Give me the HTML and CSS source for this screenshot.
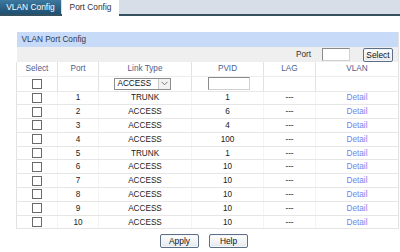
FILE: index.html
```html
<!DOCTYPE html>
<html>
<head>
<meta charset="utf-8">
<link rel="stylesheet" href="styles.css">
</head>
<body>
<div class="tabbar">
  <div class="tab tab-off">VLAN Config</div>
  <div class="tab tab-on">Port Config</div>
</div>
<div class="content">
  <table class="grid">
    <colgroup>
      <col class="c-sel"><col class="c-port"><col class="c-link"><col class="c-pvid"><col class="c-lag"><col class="c-vlan">
    </colgroup>
    <tr class="title-row"><td colspan="6">VLAN Port Config</td></tr>
    <tr class="tool-row"><td colspan="6"><div class="tool">
      <span class="lbl">Port</span><span class="inp port-inp"></span><span class="btn sel-btn">Select</span>
    </div></td></tr>
    <tr class="head-row"><th>Select</th><th>Port</th><th>Link Type</th><th>PVID</th><th>LAG</th><th>VLAN</th></tr>
    <tr class="filter-row">
      <td><span class="cb"></span></td>
      <td></td>
      <td><span class="dd"><span class="dd-text">ACCESS</span><span class="dd-arrow"><svg width="7" height="5" viewBox="0 0 7 5"><path d="M0.5 0.8 L3.5 3.8 L6.5 0.8" fill="none" stroke="#777" stroke-width="1"/></svg></span></span></td>
      <td><span class="inp pvid-inp"></span></td>
      <td></td>
      <td></td>
    </tr>
    <tr class="data"><td><span class="cb"></span></td><td>1</td><td>TRUNK</td><td>1</td><td>---</td><td class="lnk">Detail</td></tr>
    <tr class="data"><td><span class="cb"></span></td><td>2</td><td>ACCESS</td><td>6</td><td>---</td><td class="lnk">Detail</td></tr>
    <tr class="data"><td><span class="cb"></span></td><td>3</td><td>ACCESS</td><td>4</td><td>---</td><td class="lnk">Detail</td></tr>
    <tr class="data"><td><span class="cb"></span></td><td>4</td><td>ACCESS</td><td>100</td><td>---</td><td class="lnk">Detail</td></tr>
    <tr class="data"><td><span class="cb"></span></td><td>5</td><td>TRUNK</td><td>1</td><td>---</td><td class="lnk">Detail</td></tr>
    <tr class="data"><td><span class="cb"></span></td><td>6</td><td>ACCESS</td><td>10</td><td>---</td><td class="lnk">Detail</td></tr>
    <tr class="data"><td><span class="cb"></span></td><td>7</td><td>ACCESS</td><td>10</td><td>---</td><td class="lnk">Detail</td></tr>
    <tr class="data"><td><span class="cb"></span></td><td>8</td><td>ACCESS</td><td>10</td><td>---</td><td class="lnk">Detail</td></tr>
    <tr class="data"><td><span class="cb"></span></td><td>9</td><td>ACCESS</td><td>10</td><td>---</td><td class="lnk">Detail</td></tr>
    <tr class="data"><td><span class="cb"></span></td><td>10</td><td>ACCESS</td><td>10</td><td>---</td><td class="lnk">Detail</td></tr>
  </table>
  <div class="actions">
    <span class="btn big-btn">Apply</span>
    <span class="btn big-btn">Help</span>
  </div>
</div>
</body>
</html>
```
FILE: styles.css
```css
* { box-sizing: border-box; }
html, body { margin: 0; padding: 0; background: #fff; }
body {
  font-family: "Liberation Sans", Arial, sans-serif;
  font-size: 8.2px;
  color: #333;
  width: 400px;
  height: 252px;
  overflow: hidden;
}
.tabbar {
  height: 16px;
  background: #d7dee8;
  border-bottom: 2px solid #34515f;
  display: flex;
  align-items: flex-start;
}
.tab {
  height: 14px;
  line-height: 14px;
  font-size: 8.4px;
  text-align: center;
}
.tab-off {
  width: 61px;
  background: linear-gradient(#3d789e, #1e5072);
  color: #fff;
}
.tab-on {
  margin-left: 1px;
  width: 57px;
  height: 16px;
  background: #fff;
  color: #333;
  line-height: 14px;
  position: relative;
  z-index: 1;
}
.content {
  padding: 16px 2px 0 16px;
}
.grid {
  width: 382px;
  border-collapse: collapse;
  table-layout: fixed;
}
.c-sel { width: 41px; }
.c-port { width: 41px; }
.c-link { width: 93px; }
.c-pvid { width: 72px; }
.c-lag { width: 52px; }
.c-vlan { width: 83px; }
.grid td, .grid th {
  padding: 0;
  text-align: center;
  font-weight: normal;
}
.title-row td {
  height: 15px;
  background: #c7dbf8;
  text-align: left;
  padding-left: 5px;
  color: #2d3a55;
  border-right: 1px solid #dfe7f5;
}
.tool-row td {
  height: 15px;
  background: #efefef;
}
.tool {
  display: flex;
  justify-content: flex-end;
  align-items: center;
  padding-right: 5px;
}
.lbl { margin-right: 11px; }
.inp {
  display: inline-block;
  background: #fff;
  border: 1px solid #8a8a8a;
  border-right-color: #d0d0d0;
  border-bottom-color: #d0d0d0;
}
.port-inp { width: 28px; height: 13px; margin-right: 13px; }
.btn {
  display: inline-flex;
  align-items: center;
  justify-content: center;
  border: 1px solid #5d6f86;
  border-radius: 2px;
  background: linear-gradient(#ffffff, #e4e7ec);
  color: #111;
  box-shadow: inset 0 0 0 1px #f4f6f8;
}
.sel-btn { width: 30px; height: 14px; font-size: 8.4px; }
.head-row th {
  height: 14px;
  color: #4d5d8c;
  border-left: 1px solid #e2e2e2;
  border-bottom: 1px solid #ececec;
}
.filter-row td {
  height: 15px;
  border-left: 1px solid #e2e2e2;
  border-bottom: 1px solid #e8e8e8;
}
.cb {
  display: inline-block;
  width: 10px;
  height: 10px;
  border: 1px solid #6a6a6a;
  background: #fff;
  vertical-align: middle;
}
.dd {
  display: inline-flex;
  width: 57px;
  height: 12px;
  border: 1px solid #8d8d8d;
  background: #fff;
  vertical-align: middle;
  margin-right: 6px;
}
.dd-text {
  flex: 1;
  line-height: 10px;
  text-align: left;
  padding-left: 3px;
  color: #111;
}
.dd-arrow {
  width: 12px;
  border-left: 1px solid #c8c8c8;
  display: flex;
  align-items: center;
  justify-content: center;
  background: #f2f2f2;
}
.pvid-inp { width: 42px; height: 13px; vertical-align: middle; margin-left: 2px; }
.data td {
  height: 13.8px;
  border-left: 1px solid #f4f4f4;
  border-bottom: 1px solid #e6e6e6;
  color: #222;
}
.data td:first-child, .filter-row td:first-child { border-left: 1px solid #e2e2e2; }
.grid tr td:last-child, .grid tr th:last-child { border-right: 1px solid #e2e2e2; }
.lnk { color: #6f86ee !important; }
.actions {
  display: flex;
  justify-content: center;
  gap: 10px;
  padding-top: 5px;
  padding-right: 6px;
}
.big-btn { width: 39px; height: 14px; font-size: 8.4px; }
```
